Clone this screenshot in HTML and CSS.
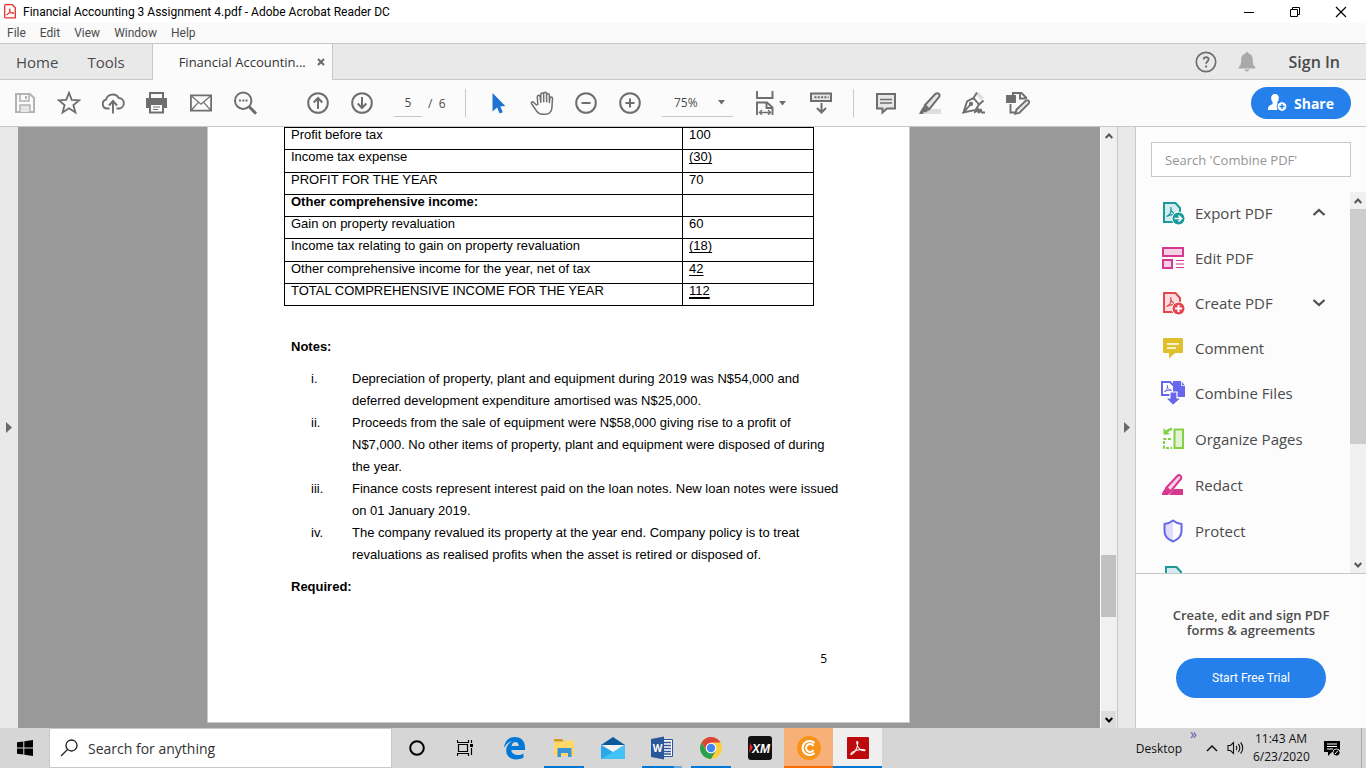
FILE: index.html
```html
<!DOCTYPE html>
<html lang="en">
<head>
<meta charset="utf-8">
<title>Financial Accounting 3 Assignment 4.pdf - Adobe Acrobat Reader DC</title>
<link rel="stylesheet" href="styles.css">
</head>
<body>
<div class="app">
  <header class="titlebar">
    <svg class="app-icon" width="12" height="15" viewBox="0 0 12 15"><path d="M1.5.7h6.8l3 3v10.1H1.5a.8.8 0 0 1-.8-.8V1.500a.8.8 0 0 1 .8-.8z" fill="#fff" stroke="#e5322d" stroke-width="1.300"/><path d="M2.800 11c1.400-.4 3-3.300 3.200-5.600 0-1.200-1-.8-.6.4.7 2 2 3.600 3.900 3.700 1 0 .8-.9-.6-.9-2.300 0-4.400.8-5.600 1.600-.6.500-.6 1-.3.800z" fill="none" stroke="#e5322d"/></svg>
    <span class="window-title">Financial Accounting 3 Assignment 4.pdf - Adobe Acrobat Reader DC</span>
    <div class="window-buttons">
      <button aria-label="Minimize"><svg width="12" height="12"><path d="M1 6.500h10" stroke="#000"/></svg></button>
      <button aria-label="Restore"><svg width="12" height="12" fill="none" stroke="#000"><path d="M1.500 3.500h7v7h-7zM3.500 3V1.500h7v7H9"/></svg></button>
      <button aria-label="Close"><svg width="12" height="12"><path d="M1 1l10 10M11 1L1 11" stroke="#000" stroke-width="1.200"/></svg></button>
    </div>
  </header>

  <nav class="menubar" aria-label="Menu">
    <button>File</button><button>Edit</button><button>View</button><button>Window</button><button>Help</button>
  </nav>

  <div class="tabs">
    <button class="tab-link">Home</button>
    <button class="tab-link">Tools</button>
    <div class="doc-tab">
      <span>Financial Accountin...</span>
      <button aria-label="Close tab"><svg width="8" height="8"><path d="M1 1l6 6M7 1L1 7" stroke="#6a6a6a" stroke-width="2"/></svg></button>
    </div>
    <div class="account">
      <button aria-label="Help"><svg width="22" height="22" fill="none" stroke="#6e6e6e"><circle cx="11" cy="11" r="9.700" stroke-width="1.700"/><path d="M8.600 8.600c0-3.200 5-3.100 5 0 0 2-2.500 1.900-2.500 4.200" stroke-width="1.800"/><path d="M11.100 14.500v2" stroke-width="2"/></svg></button>
      <button aria-label="Notifications"><svg width="18" height="20" fill="#a9a9a9"><path d="M9 0c1 0 1.500.7 1.500 1.500 3 .8 4.300 3 4.300 6 0 4.500.6 6.300 2.500 7.300v1.700H.7v-1.700c1.900-1 2.500-2.800 2.500-7.300 0-3 1.300-5.200 4.300-6C7.500.7 8 0 9 0zM6.500 17.500h5c-.5 2.500-4.500 2.500-5 0z"/></svg></button>
      <button class="sign-in">Sign In</button>
    </div>
  </div>

  <div class="toolbar" role="toolbar" aria-label="Document tools">
    <button class="tool" aria-label="Save"><svg width="22" height="22" fill="none" stroke="#b3b3b3" stroke-width="2"><path d="M2 2h14l4 4v14H2z"/><path d="M6 2v7h9V2" stroke-width="1.600"/><path d="M12 4v3"/><path d="M6 20v-7h10v7" fill="#e6e6e6" stroke-width="1.500"/></svg></button>
    <button class="tool" aria-label="Star"><svg width="24" height="24" fill="none" stroke="#6e6e6e" stroke-width="1.800"><path d="M12 1.800l2.700 7.100 7.600.4-5.900 4.800 2 7.400-6.400-4.200-6.400 4.200 2-7.400-5.900-4.800 7.600-.4z"/></svg></button>
    <button class="tool" aria-label="Upload"><svg width="24" height="24" fill="none" stroke="#6e6e6e" stroke-width="1.900"><path d="M8.500 17.500H6A4.500 4.500 0 0 1 5 8.700 7 7 0 0 1 17.800 7a5.300 5.300 0 0 1 .7 10.500h-3"/><path d="M12 22.500V10.500M8 14.500l4-4.500 4 4.500"/></svg></button>
    <button class="tool" aria-label="Print"><svg width="24" height="24"><path d="M5 7V2h13v5" fill="none" stroke="#6e6e6e" stroke-width="2"/><path d="M1 7h21v10h-4v-4H5v4H1z" fill="#6e6e6e"/><path d="M5 13h13v8.500H5z" fill="#fff" stroke="#6e6e6e" stroke-width="2"/><path d="M8 16h7M8 18.500h5" stroke="#6e6e6e"/></svg></button>
    <button class="tool" aria-label="Email"><svg width="24" height="24" fill="none" stroke="#6e6e6e"><path d="M1.900 4.400h20.200v15.200H1.900z" stroke-width="1.800"/><path d="M2.500 5l9.500 8.300L21.500 5M2.500 19l7-7.800M21.500 19l-7-7.800" stroke-width="1.200"/></svg></button>
    <button class="tool find" aria-label="Find"><svg width="24" height="24" fill="none" stroke="#6e6e6e"><circle cx="10.200" cy="9.700" r="8.200" stroke-width="2"/><path d="M16.200 15.700l6.800 7" stroke-width="3"/><path d="M6 9.500h2M9.300 9.500h2M12.500 9.500h2" stroke-width="2"/></svg></button>
    <button class="tool" aria-label="Previous page"><svg width="24" height="24" fill="none" stroke="#6e6e6e" stroke-width="2"><circle cx="12" cy="12" r="9.800"/><path d="M12 18V7.500M7.700 11.500L12 7l4.300 4.500"/></svg></button>
    <button class="tool" aria-label="Next page"><svg width="24" height="24" fill="none" stroke="#6e6e6e" stroke-width="2"><circle cx="12" cy="12" r="9.800"/><path d="M12 6v10.500M7.700 12.500L12 17l4.300-4.500"/></svg></button>
    <input class="page-number" type="text" value="5" aria-label="Page number">
    <span class="page-count">/&nbsp; 6</span>
    <span class="divider"></span>
    <button class="tool" aria-label="Select"><svg width="24" height="24"><path d="M6.500 2v18.500l4.700-4 2.400 6 3.200-1.300-2.500-5.800 5-.4z" fill="#1d73cf"/></svg></button>
    <button class="tool" aria-label="Pan"><svg width="24" height="24" fill="none" stroke="#6e6e6e" stroke-width="1.500" stroke-linejoin="round"><path d="M7 14.500L3.500 11.200c-1.200-1-2.800.2-1.900 1.500l5 7.500c1.500 2.200 3 3 6 3h2.500c4 0 6.600-2.600 6.800-6.200L22.500 7.500c0-2-2.500-2-2.700 0l-.4 4V4.200c0-2-2.700-2-2.800 0v6.500-8c0-2-2.900-2-2.900 0v8-7.200c0-2-2.900-2-2.900 0v7.700l-.7-5.500C10 3.700 7.200 4 7.300 6l.5 8"/></svg></button>
    <button class="tool" aria-label="Zoom out"><svg width="24" height="24" fill="none" stroke="#6e6e6e" stroke-width="2"><circle cx="12" cy="12" r="9.800"/><path d="M7.500 12h9"/></svg></button>
    <button class="tool" aria-label="Zoom in"><svg width="24" height="24" fill="none" stroke="#6e6e6e" stroke-width="2"><circle cx="12" cy="12" r="9.800"/><path d="M7.500 12h9M12 7.500v9"/></svg></button>
    <div class="zoom-box">
      <select class="zoom" aria-label="Zoom level"><option>75%</option></select>
      <svg width="7" height="5" fill="#6e6e6e"><path d="M0 0h7L3.500 4.500z"/></svg>
    </div>
    <button class="tool fit" aria-label="Fit width"><svg width="18" height="24" viewBox="1 0 18 24"><g fill="none" stroke="#6e6e6e" stroke-width="1.900"><path d="M2 0v7h15.500V0M2 24V11.500h10l5.500 5V24M11.500 11.500V17h6"/><path d="M5 21.500h10M7 19l-2.600 2.500L7 24M13 19l2.600 2.500L13 24" stroke-width="1.300"/></g></svg><svg width="7" height="5" fill="#6e6e6e"><path d="M0 0h7L3.500 4.500z"/></svg></button>
    <button class="tool" aria-label="Scrolling"><svg width="24" height="24" fill="none" stroke="#6e6e6e" stroke-width="2"><path d="M2 2.500h20v7.500H2z" fill="#e6e6e6"/><path d="M5.500 6.300h14" stroke-dasharray="2 1.300"/><path d="M12.500 12v9.500M8 17l4.500 4.500L17 17"/></svg></button>
    <span class="divider second"></span>
    <button class="tool" aria-label="Comment"><svg width="24" height="24" fill="none" stroke="#6e6e6e" stroke-width="2"><path d="M3 3h18v14.500h-8l-4.500 4v-4H3z" fill="#e6e6e6"/><path d="M6 8.500h12M6 12h12" stroke-width="1.400"/></svg></button>
    <button class="tool" aria-label="Highlight"><svg width="24" height="24"><path d="M9 18h14v5H5z" fill="#dedede"/><path d="M7 14L17.500 2.800c2.500-1.600 5 .6 3.700 3L11 18.500z" fill="#e6e6e6" stroke="#6e6e6e" stroke-width="2"/><path d="M6 14.500l4.500 4.500-2.500 2.500-2-.5L5 23H1l2-4z" fill="#6e6e6e"/></svg></button>
    <button class="tool" aria-label="Sign"><svg width="24" height="24" fill="none" stroke="#6e6e6e" stroke-width="1.900"><path d="M13 3l4-2 4.500 6-2 2.500z" fill="#dedede" stroke="none"/><path d="M1.500 21.500L5 10.500 11.500 7l5.500 6.500L13.500 19 1.500 21.500l6.500-7.500M10.500 8.500L15 1.500M16 14.500l5.500-5"/><circle cx="9" cy="13" r="1.200"/><path d="M12 21.500c3-1 3-3.500 4-3.500s-.5 3.500.7 3.500 1-3 2-3 0 3 1.300 3h3"/></svg></button>
    <button class="tool" aria-label="More tools"><svg width="26" height="24" fill="none" stroke="#6e6e6e" stroke-width="1.900"><path d="M8 4V2h8.500L21 6.500V8M5.500 13v8.500h5.500M15 2v5.500h5.500"/><path d="M2 5h8v6H2z" fill="#6e6e6e"/><path d="M11.500 18.500L21 9.500c2-1 4 1 2.800 2.800l-9.500 9.500-4 1z" fill="#e6e6e6"/></svg></button>
    <button class="share"><svg width="20" height="18"><path d="M7 0c4.800 0 4.500 6 2.400 8v1.500L12 11l-3 5H0c0-3.800 1-4.300 4.600-6V8C2.500 6 2.200 0 7 0z" fill="#fff"/><circle cx="14" cy="12.500" r="4.800" fill="#fff" stroke="#2680eb"/><path d="M11.500 12.500h5M14 10v5" stroke="#2680eb" stroke-width="1.400"/></svg>Share</button>
  </div>

  <main class="workspace">
    <button class="rail rail-left" aria-label="Show navigation pane"><svg width="6" height="11"><path d="M0 0v11l6-5.500z" fill="#6a6a6a"/></svg></button>
    <section class="viewer">
      <article class="page">
        <table class="statement">
          <colgroup><col class="col-item"><col class="col-amount"></colgroup>
          <tbody>
            <tr><td>Profit before tax</td><td>100</td></tr>
            <tr><td>Income tax expense</td><td><u>(30)</u></td></tr>
            <tr><td>PROFIT FOR THE YEAR</td><td>70</td></tr>
            <tr><th scope="row">Other comprehensive income:</th><td></td></tr>
            <tr><td>Gain on property revaluation</td><td>60</td></tr>
            <tr><td>Income tax relating to gain on property revaluation</td><td><u>(18)</u></td></tr>
            <tr><td>Other comprehensive income for the year, net of tax</td><td><u>42</u></td></tr>
            <tr><td>TOTAL COMPREHENSIVE INCOME FOR THE YEAR</td><td><u class="total">112</u></td></tr>
          </tbody>
        </table>
        <h2>Notes:</h2>
        <dl class="notes">
          <dt>i.</dt><dd>Depreciation of property, plant and equipment during 2019 was N$54,000 and<br>deferred development expenditure amortised was N$25,000.</dd>
          <dt>ii.</dt><dd>Proceeds from the sale of equipment were N$58,000 giving rise to a profit of<br>N$7,000. No other items of property, plant and equipment were disposed of during<br>the year.</dd>
          <dt>iii.</dt><dd>Finance costs represent interest paid on the loan notes. New loan notes were issued<br>on 01 January 2019.</dd>
          <dt>iv.</dt><dd>The company revalued its property at the year end. Company policy is to treat<br>revaluations as realised profits when the asset is retired or disposed of.</dd>
        </dl>
        <h2>Required:</h2>
        <p class="folio">5</p>
      </article>
    </section>
    <div class="scrollbar viewer-scroll">
      <button aria-label="Scroll up"><svg width="8" height="6"><path d="M.7 5L4 1.500 7.300 5" fill="none" stroke="#555" stroke-width="2"/></svg></button>
      <span class="space-above"></span><span class="thumb"></span><span class="space-below"></span>
      <button class="pressed" aria-label="Scroll down"><svg width="8" height="6"><path d="M.7 1L4 4.500 7.300 1" fill="none" stroke="#000" stroke-width="2"/></svg></button>
    </div>
    <button class="rail rail-right" aria-label="Hide tools pane"><svg width="6" height="11"><path d="M0 0v11l6-5.500z" fill="#6a6a6a"/></svg></button>

    <aside class="tools-pane">
      <div class="search-wrap"><input class="tool-search" type="text" placeholder="Search 'Combine PDF'" aria-label="Search tools"></div>
      <div class="tool-area">
        <ul class="tool-list">
          <li class="short"><button><svg width="24" height="24"><path d="M3 2h11.500l4.500 5v14H3z" fill="#d3ebec" stroke="#1a9a9a" stroke-width="2"/><path d="M5.500 15.500c4-1.500 5-5.500 4.200-9.500 0 4 2 6.500 6 7.500-4-.5-7 .5-10.200 2z" fill="none" stroke="#1a9a9a" stroke-width="1.200"/><circle cx="17.500" cy="17.500" r="6.500" fill="#1a9a9a" stroke="#fcfcfc"/><path d="M13.500 17.500h6M17.500 14.500l3 3-3 3" fill="none" stroke="#fff" stroke-width="1.700"/></svg>Export PDF<svg class="chev" width="14" height="9"><path d="M1.500 7L7 2l5.500 5" fill="none" stroke="#505050" stroke-width="2.300"/></svg></button></li>
          <li class="short"><button><svg width="24" height="24" stroke="#d83790" stroke-width="2"><path d="M2 2h20v8H2zM2 14h9v8H2z" fill="#f6d1e5"/><path d="M15 14.500h8M15 18h8M15 21.500h8" stroke-width="1.200"/></svg>Edit PDF</button></li>
          <li class="short"><button><svg width="24" height="24"><path d="M3 2h11.500l4.500 5v14H3z" fill="#fadcdf" stroke="#e34850" stroke-width="2"/><path d="M5.500 15.500c4-1.500 5-5.500 4.200-9.500 0 4 2 6.500 6 7.500-4-.5-7 .5-10.200 2z" fill="none" stroke="#e34850" stroke-width="1.200"/><circle cx="17.500" cy="17.500" r="6.500" fill="#e34850" stroke="#fcfcfc"/><path d="M14 17.500h7M17.500 14v7" fill="none" stroke="#fff" stroke-width="2"/></svg>Create PDF<svg class="chev" width="14" height="9"><path d="M1.500 2L7 7l5.500-5" fill="none" stroke="#505050" stroke-width="2.300"/></svg></button></li>
          <li class="short"><button><svg width="24" height="24"><path d="M3.500 2h17c1 0 1.500.5 1.500 1.500v12c0 1-.5 1.500-1.500 1.500H14l-6 5.500V17H3.500c-1 0-1.500-.5-1.500-1.500v-12C2 2.500 2.500 2 3.500 2z" fill="#dfbf2a"/><path d="M6 8h12M6 12h9" stroke="#fff" stroke-width="1.400"/></svg>Comment</button></li>
          <li><button><svg width="24" height="24"><path d="M12 0h9v4h4v12H12z" fill="#6767ec"/><path d="M20.500 0l4 4.500h-4z" fill="#6767ec" stroke="#fff" stroke-width=".8"/><path d="M1 1h8l4 4v9H1z" fill="#fff" stroke="#6767ec" stroke-width="2"/><path d="M3.500 10.500c2.500-1 3.200-3.500 2.800-6 .2 3 1.500 4.200 4.200 4.800-2.500-.3-4.500.2-7 1.200z" fill="none" stroke="#6767ec"/><path d="M9 11h7v6h4.500L12 24.500 4.500 17H9z" fill="#6767ec" stroke="#fff" stroke-width="1.200"/></svg>Combine Files</button></li>
          <li><button><svg width="24" height="24" fill="none" stroke="#85cf45" stroke-width="2"><path d="M13.500 2.500h8.500v18.500h-8.500z" fill="#e1f3d2"/><path d="M10 12H3v9h8" stroke-dasharray="3 1.500"/><path d="M11 2C8.500 2 7 3 5.500 5" stroke-width="2.500"/><path d="M2.500 1v6.500H9z" fill="#85cf45" stroke="none"/></svg>Organize Pages</button></li>
          <li><button><svg width="24" height="24"><path d="M8 22l5-6h9v6z" fill="#d83790"/><path d="M5.500 14.500L16.500 2.700c2.200-1.500 4.800.6 3.600 3L9.500 18.500z" fill="#f6d1e5" stroke="#d83790" stroke-width="2"/><path d="M4.500 14.500l5 5L7 22H1c0-3 1-3 3.500-7.500z" fill="#d83790"/></svg>Redact</button></li>
          <li><button><svg width="24" height="24"><path d="M12 1.500L3.500 5v8c0 5 4 7.500 8.500 9.500z" fill="#dedef8"/><path d="M12 1.500c2.500 2 5 3 8.500 3.500v7c0 5.500-3.500 8.500-8.500 10.500-5-2-8.500-5-8.500-10.500V5c3.500-.5 6-1.500 8.500-3.500z" fill="none" stroke="#6767ec" stroke-width="2"/></svg>Protect</button></li>
          <li><button><svg width="24" height="24"><path d="M5 2h10.500l4.500 5v14H5z" fill="#d3ebec" stroke="#1a9a9a" stroke-width="2"/></svg>Compress PDF</button></li>
        </ul>
        <div class="scrollbar">
          <button aria-label="Scroll tools up"><svg width="8" height="6"><path d="M.7 5L4 1.500 7.300 5" fill="none" stroke="#555" stroke-width="2"/></svg></button>
          <span class="tools-thumb"></span><span class="tools-space"></span>
          <button aria-label="Scroll tools down"><svg width="8" height="6"><path d="M.7 1L4 4.500 7.300 1" fill="none" stroke="#555" stroke-width="2"/></svg></button>
        </div>
      </div>
      <div class="promo">
        <p>Create, edit and sign PDF<br>forms &amp; agreements</p>
        <button class="trial">Start Free Trial</button>
      </div>
    </aside>
  </main>

  <footer class="taskbar">
    <button class="start" aria-label="Start"><svg width="16" height="16"><path d="M0 2.300l6.300-.9v6.100H0zM7.300 1.200L16 0v7.500H7.300zM0 8.500h6.300v6.100L0 13.700zM7.300 8.500H16V16l-8.700-1.200z"/></svg></button>
    <label class="task-search"><svg width="18" height="18" fill="none" stroke="#222" stroke-width="1.300"><circle cx="11.500" cy="6.500" r="5.500"/><path d="M7.500 10.500L1 17"/></svg><input type="text" placeholder="Search for anything" aria-label="Search for anything"></label>
    <div class="apps">
      <button class="app-button" aria-label="Cortana"><svg width="18" height="18"><circle cx="9" cy="9" r="6.800" fill="none" stroke="#000" stroke-width="2"/></svg></button>
      <button class="app-button" aria-label="Task view"><svg width="18" height="18" fill="none" stroke="#000"><path d="M1.500 5.500h9v7h-9zM.5 1v2.500h11V1M.5 17v-2.500h11V17M14.500 1v3M14.500 9v7" stroke-width="1.200"/><path d="M13 5h3v3h-3z" fill="#000" stroke="none"/></svg></button>
      <button class="app-button" aria-label="Edge"><svg width="24" height="24"><path d="M1 12C1.500 5 6 1 12 1c6.500 0 10 4.500 10 10.500V14H8.300c.2 5.200 7.700 6.500 12.200 3.500v4.300C12.500 25.500 3.500 23 3.200 15 3 10 6 6.500 10 5.300 5.500 5.500 2.500 8.500 1 12zM8.500 10h7.300c0-5.500-6.600-5.300-7.300 0z" fill="#0078d7"/></svg></button>
      <button class="app-button running" aria-label="File Explorer"><svg width="24" height="24"><path d="M2 3h8l2 2.500H2z" fill="#d49b12"/><path d="M2 6h9l2-1.500h9V20H2z" fill="#ffd868"/><path d="M5.500 21v-9h14v9H16v-4H9v4z" fill="#3994d8"/></svg></button>
      <button class="app-button" aria-label="Mail"><svg width="26" height="24"><path d="M1 9l12-8 12 8z" fill="#0b5a9c"/><path d="M4 9h18l-9 8z" fill="#f3f3f3"/><path d="M1 9l12 7 12-7v14H1z" fill="#28a8ea"/><path d="M1 23L25 9v14z" fill="#43c3f5"/><path d="M2.500 9h21L13 15.500z" fill="#f3f3f3"/></svg></button>
      <button class="app-button running stacked" aria-label="Word"><svg width="24" height="24"><path d="M12 3.500h10.500v17H12z" fill="#fff" stroke="#2b579a"/><path d="M14 6.500h7M14 9.500h7M14 12.500h7M14 15.500h7M14 18h7" stroke="#2b579a" stroke-width="1.300"/><path d="M1 3l13-2.500v23L1 21z" fill="#2b579a"/><text x="7.500" y="16" class="word-mark">W</text></svg></button>
      <button class="app-button running" aria-label="Chrome"><svg width="24" height="24"><circle cx="12" cy="12" r="11" fill="#ffcd41"/><path d="M2.500 6.500a11 11 0 0 1 19 0H12L7.300 14.500z" fill="#db4437"/><path d="M2.500 6.500l4.700 8.200c2 3.300 6 3.200 9.500 0L12 23A11 11 0 0 1 2.500 6.500z" fill="#28a052"/><circle cx="12" cy="12" r="5.300" fill="#fff"/><circle cx="12" cy="12" r="4.200" fill="#4285f4"/></svg></button>
      <button class="app-button" aria-label="XM"><svg width="24" height="24"><rect width="24" height="24" rx="3" fill="#111"/><path d="M2 7l3 4.500L1 17z" fill="#e22"/><text x="13" y="16.500" class="xm-mark">XM</text></svg></button>
      <button class="app-button coin" aria-label="CryptoTab"><svg width="24" height="24"><circle cx="12" cy="12" r="12" fill="#f7931a"/><path d="M17.500 7A7 7 0 1 0 17.500 17M16.500 10a4 4 0 1 0 0 4" fill="none" stroke="#fff" stroke-width="2"/></svg></button>
      <button class="app-button running current" aria-label="Adobe Acrobat Reader"><svg width="22" height="22"><rect width="22" height="22" rx="1" fill="#bd0a0d"/><path d="M4.500 17.500c3-1 6-6.500 6.300-11.500 0-2.200-1.400-1.800-1 0 .6 4 3.200 7.600 7.200 7.800 1.500 0 1.500-1.300-.5-1.300-4.500-.3-9 1.200-11.500 3-1.500 1-1.300 2.300-.5 2z" fill="none" stroke="#fff" stroke-width="1.100"/></svg></button>
    </div>
    <div class="tray">
      <span class="desktop-label">Desktop</span><button class="more" aria-label="Desktop toolbar">»</button>
      <button aria-label="Show hidden icons"><svg width="12" height="8"><path d="M1 7l5-5 5 5" fill="none" stroke="#111" stroke-width="1.500"/></svg></button>
      <button class="sound" aria-label="Volume"><svg width="18" height="14" fill="none" stroke="#111" stroke-width="1.100"><path d="M1 4.500h2.500l3-3v11l-3-3H1zM9 5c1 1 1 3 0 4M11.300 3c2 2 2 6 0 8M13.600 1.500c2.800 3 2.800 8 0 11"/></svg></button>
      <time class="clock"><span>11:43 AM</span><span>6/23/2020</span></time>
      <button class="notice" aria-label="Notifications"><svg width="17" height="17"><path d="M0 1h16v11H8l-4 4v-4H0z"/><path d="M3 4h10M3 6.500h10M3 9h6" stroke="#fff"/><circle cx="12.500" cy="12.500" r="3.600" fill="#000" stroke="#ddd"/><path d="M11 14l3-3.500" stroke="#fff"/></svg></button>
    </div>
  </footer>
</div>
</body>
</html>
```
FILE: styles.css
```css
* { box-sizing: border-box; }
body { margin: 0; font-family: "Open Sans", "Noto Sans", sans-serif; font-size: 12px; color: #4b4b4b; }
button, input, select { font: inherit; color: inherit; }
button { display: flex; align-items: center; justify-content: center; padding: 0; border: 0; background: none; white-space: nowrap; }
svg { flex: none; display: block; }
.app { display: flex; flex-direction: column; height: 100vh; overflow: hidden; background: #fafafa; }

.titlebar { display: flex; align-items: center; height: 23px; padding-left: 4px; background: #fff; color: #000; font-family: Roboto, sans-serif; }
.window-title { margin-left: 7px; white-space: nowrap; }
.window-buttons { display: flex; margin-left: auto; padding-right: 2px; }
.window-buttons button { width: 46px; height: 20px; }

.menubar { display: flex; align-items: center; gap: 14px; height: 20px; padding-left: 7px; font-family: Roboto, sans-serif; }

.tabs { display: flex; height: 37px; border: solid #c8c8c8; border-width: 1px 0; background: #e9e9e9; }
.tab-link { padding-left: 16px; margin-right: 13px; font-size: 15px; }
.doc-tab { display: flex; align-items: center; gap: 11px; width: 181px; margin: 0 0 -1px 14px; padding-left: 26px; border: solid #c8c8c8; border-width: 0 1px; background: #fbfbfb; font-size: 13px; color: #333; white-space: nowrap; }
.account { display: flex; align-items: center; gap: 21px; margin-left: auto; padding-right: 26px; }
.sign-in { margin-left: 12px; font-size: 16px; font-weight: 600; }

.toolbar { display: flex; align-items: center; height: 47px; padding: 0 15px 0 3px; border-bottom: 1px solid #c8c8c8; background: #fbfbfb; }
.tool { flex: none; width: 44px; height: 44px; }
.find { margin-right: 29px; }
.page-number { width: 28px; height: 28px; margin-left: 10px; padding: 0; border: 0; border-bottom: 1px solid #c8c8c8; background: none; text-align: center; }
.page-count { width: 43px; padding-left: 6px; white-space: nowrap; }
.divider { width: 1px; height: 28px; margin-right: 10px; background: #c8c8c8; }
.zoom-box { display: flex; align-items: center; width: 71px; height: 28px; margin: 0 9px 0 10px; padding-right: 8px; border-bottom: 1px solid #c8c8c8; }
.zoom { flex: 1; min-width: 0; padding: 0 0 0 12px; border: 0; background: none; appearance: none; }
.tool.fit { width: 57px; gap: 5px; padding-right: 13px; justify-content: flex-end; }
.second { margin: 0 10px; }
.share { gap: 6px; width: 100px; height: 32px; margin-left: auto; border-radius: 16px; background: #2680eb; color: #fff; font-size: 14px; font-weight: 700; }

.workspace { display: flex; flex: 1; min-height: 0; background: #999; }
.rail { flex: none; background: #e9e9e9; }
.rail-left { width: 18px; }
.rail-right { width: 19px; border: solid #c8c8c8; border-width: 0 1px; }
.viewer { flex: 1; padding-right: 1px; overflow: hidden; }
.page { width: 703px; max-width: 100%; margin: 0 auto; padding: 0 76px 56px; border: 1px solid #c8c8c8; border-top: 0; background: #fff; color: #000; font: 13px/15px "Liberation Sans", Arial, sans-serif; }
.statement { width: 530px; height: 179px; border-collapse: collapse; table-layout: fixed; }
.col-amount { width: 131px; }
.statement td, .statement th { height: 22px; padding: 0 6px; border: 1px solid #000; vertical-align: top; text-align: left; line-height: 13px; white-space: nowrap; }
.statement u { text-underline-offset: 2px; }
.statement .total { text-decoration-thickness: 2px; }
.page h2 { margin: 33px 0 0 7px; font-size: 13px; line-height: 15px; }
.notes { display: grid; grid-template-columns: 41px 1fr; margin: 14px 0 -7px 27px; line-height: 22px; white-space: nowrap; }
.notes dd { margin: 0; }
.page .notes + h2 { margin-top: 20px; }
.folio { margin: 57px 6px 0 0; font-family: "Open Sans", sans-serif; font-size: 12px; text-align: right; }

.scrollbar { display: flex; flex: none; flex-direction: column; width: 16px; background: #f0f0f0; }
.scrollbar button { height: 17px; }
.viewer-scroll { border-left: 1px solid #fff; width: 17px; }
.space-above { flex: 411; }
.thumb { height: 62px; margin-right: 1px; background: #c1c1c1; }
.space-below { flex: 94; }
.scrollbar .pressed { margin-right: 1px; background: #dcdcdc; }

.tools-pane { display: flex; flex: none; flex-direction: column; width: 230px; background: #fcfcfc; }
.search-wrap { padding: 15px 15px 13px; }
.tool-search { width: 100%; height: 35px; padding: 0 13px; border: 1px solid #c8c8c8; background: #fff; font-size: 13px; }
.tool-search::placeholder { color: #959595; }
.tool-area { display: flex; flex: 1; min-height: 0; overflow: hidden; }
.tool-list { flex: 1; margin: 0; padding: 0; list-style: none; }
.tool-list li { height: 46px; }
.tool-list .short { height: 45px; }
.tool-list button { width: 100%; height: 100%; gap: 10px; padding: 0 24px 0 25px; justify-content: flex-start; font-size: 15px; }
.chev { margin-left: auto; }
.tool-area .scrollbar { margin-top: 2px; }
.tools-thumb { flex: 235; background: #cdcdcd; }
.tools-space { flex: 112; }
.promo { display: flex; flex-direction: column; align-items: center; height: 155px; padding-top: 34px; border-top: 1px solid #c8c8c8; }
.promo p { margin: 0 0 20px; text-align: center; font-size: 13px; font-weight: 600; line-height: 15px; }
.trial { width: 150px; height: 40px; border-radius: 20px; background: #2680eb; color: #fff; font-family: Roboto, sans-serif; }

.taskbar { display: flex; height: 40px; background: #d6d6d6; color: #111; }
.start { width: 49px; }
.task-search { display: flex; align-items: center; gap: 10px; width: 343px; padding-left: 10px; border: 1px solid #c8c8c8; background: #fff; }
.task-search input { flex: 1; min-width: 0; padding: 0; border: 0; background: none; font-size: 14px; }
.task-search input::placeholder { color: #333; }
.apps { display: flex; }
.app-button { width: 49px; height: 40px; }
.running { background: linear-gradient(#0078d7, #0078d7) center bottom / 40px 2px no-repeat; }
.stacked { background-image: linear-gradient(90deg, #0078d7 80%, #66a9e0 80%); }
.coin { background: linear-gradient(#f76b00, #f76b00) bottom / 100% 2px no-repeat #f7b077; }
.current { background-color: #efefef; background-size: 100% 2px; }
.word-mark { fill: #fff; font: 700 10px "Open Sans", sans-serif; text-anchor: middle; }
.xm-mark { fill: #fff; font: italic 700 12px "Liberation Sans", sans-serif; text-anchor: middle; }
.tray { display: flex; align-items: center; margin-left: auto; padding-right: 4px; }
.more { align-self: flex-start; margin: 0 9px 0 8px; font-size: 14px; line-height: 12px; color: #5b5ba8; }
.sound { margin: 0 8px 0 9px; }
.clock { display: flex; flex-direction: column; width: 56px; text-align: center; line-height: 18px; white-space: nowrap; }
.notice { width: 53px; height: 40px; padding-right: 5px; border-right: 1px solid #aaa; }
```
